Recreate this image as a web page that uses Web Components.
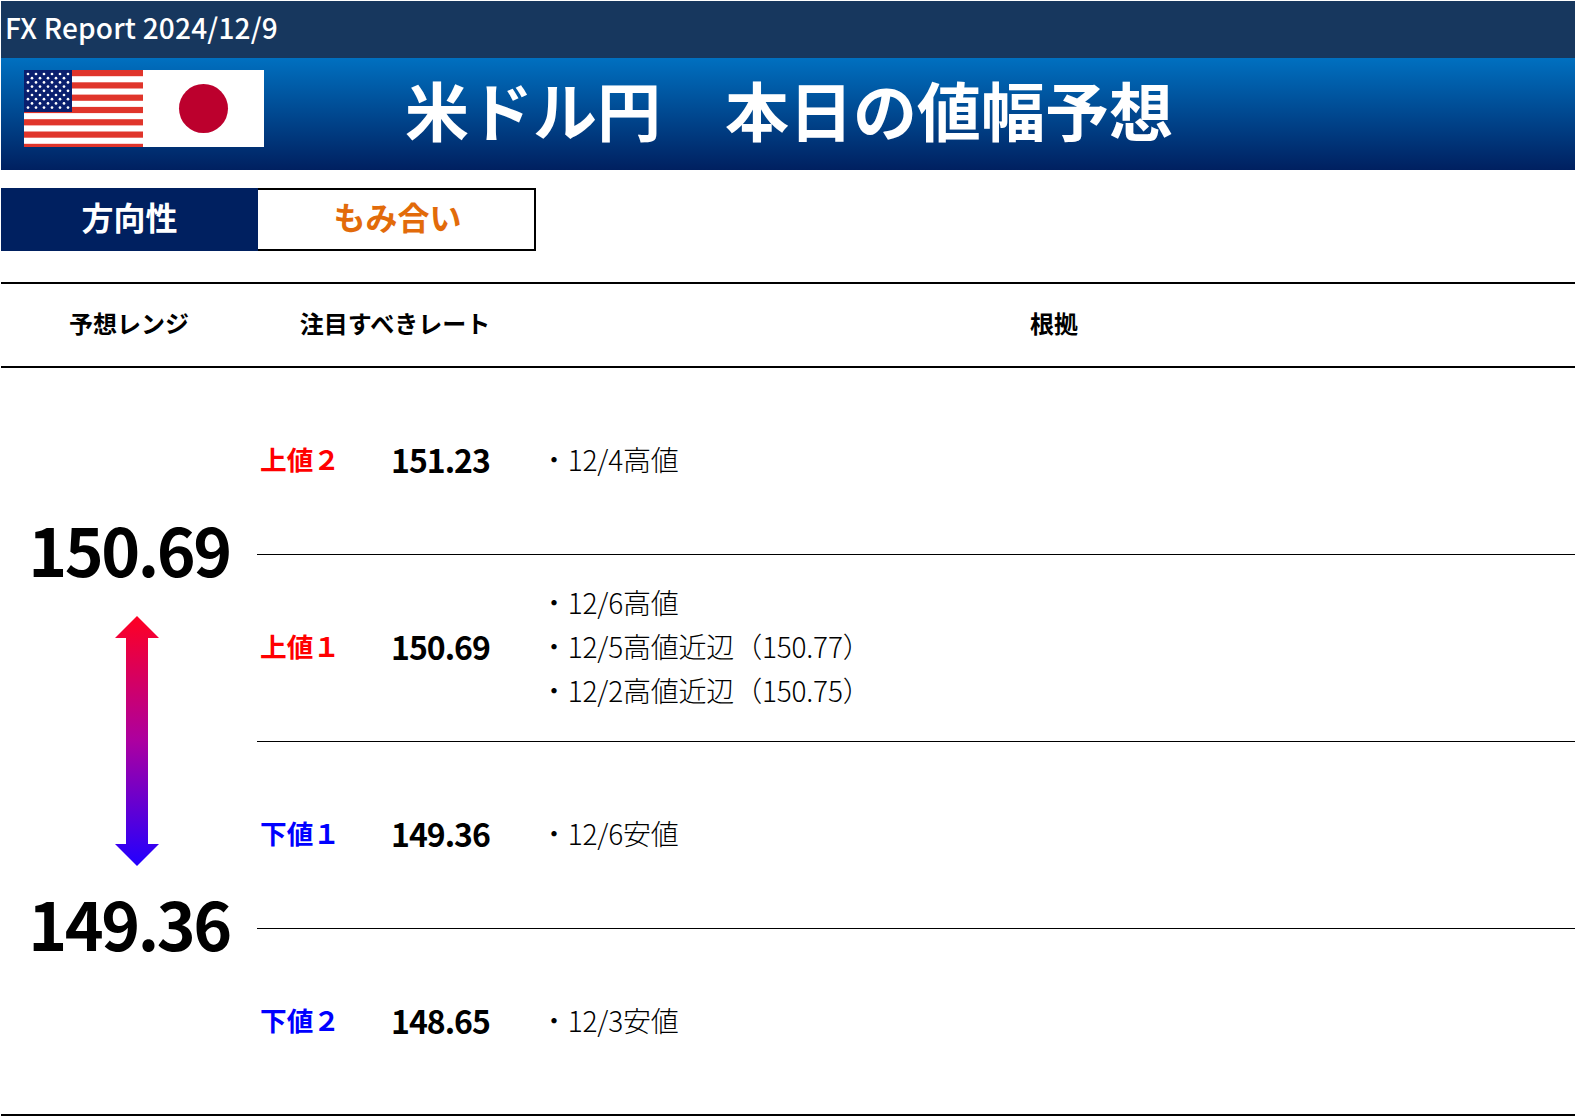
<!DOCTYPE html>
<html lang="ja"><head><meta charset="utf-8"><title>FX Report</title>
<style>
html,body{margin:0;padding:0;background:#fff}
body{padding:1px 0 0 1px;overflow:hidden;height:1116px;box-sizing:border-box;font-family:"Noto Sans CJK JP","Noto Sans",sans-serif;color:#000}
</style></head><body>
<fx-topbar>FX Report 2024/12/9</fx-topbar>
<fx-banner title-text="米ドル円　本日の値幅予想"><flag-pair></flag-pair></fx-banner>
<fx-tabs label="方向性" value="もみ合い"></fx-tabs>
<fx-table>
  <fx-range slot="range" high="150.69" low="149.36"></fx-range>
  <fx-row kind="up" label="上値２" rate="151.23"><div>・12/4高値</div></fx-row>
  <fx-row kind="up" label="上値１" rate="150.69"><div>・12/6高値</div><div>・12/5高値近辺（150.77）</div><div>・12/2高値近辺（150.75）</div></fx-row>
  <fx-row kind="down" label="下値１" rate="149.36"><div>・12/6安値</div></fx-row>
  <fx-row kind="down" label="下値２" rate="148.65"><div>・12/3安値</div></fx-row>
</fx-table>
<script>
function el(name,css,html){
  customElements.define(name,class extends HTMLElement{
    connectedCallback(){
      if(this.shadowRoot)return;
      const r=this.attachShadow({mode:'open'});
      r.innerHTML='<style>'+css+'</style>'+(typeof html==='function'?html(this):html);
    }
  });
}
el('fx-topbar',`:host{display:flex;align-items:center;height:57px;box-sizing:border-box;padding:0 0 6px 4px;background:#17375e;color:#fff;font-size:28px;font-weight:500;letter-spacing:.2px;line-height:1}`,`<slot></slot>`);
el('fx-banner',`:host{display:flex;align-items:flex-start;height:112px;box-sizing:border-box;background:linear-gradient(#0070c0,#002060);padding:12px 0 0 23px;color:#fff}
h1{margin:-2px 0 0 141px;font-size:64px;font-weight:700;line-height:80px;white-space:nowrap}`,
 h=>`<slot></slot><h1>${h.getAttribute('title-text')}</h1>`);
el('flag-pair',`:host{display:flex;width:240px;height:77px;flex:none}svg{display:block}`,()=>{
  let s='';
  for(let i=0;i<9;i++){const n=i%2?5:6;for(let j=0;j<n;j++){s+=`<circle cx="${(i%2?8:4)+j*8}" cy="${4+i*4.2}" r="1.35" fill="#fff"/>`;}}
  let st='';for(let i=0;i<7;i++){st+=`<rect x="0" y="${i*12.3}" width="119" height="6.2" fill="#e0352b"/>`;}
  return `<svg width="119" height="77" viewBox="0 0 119 77"><rect width="119" height="77" fill="#fff"/>${st}<rect width="48" height="42" fill="#0a1f6e"/>${s}</svg>
  <svg width="121" height="77" viewBox="0 0 121 77"><rect width="121" height="77" fill="#fff"/><circle cx="60.500" cy="38.500" r="24.500" fill="#bc002d"/></svg>`;
});
el('fx-tabs',`:host{display:flex;height:63px;margin-top:18px;width:535px;font-size:32px;font-weight:700;line-height:1}
.a{width:257px;background:#002060;color:#fff;display:flex;align-items:center;justify-content:center;flex:none;padding:0 0 7px 0;box-sizing:border-box}
.b{flex:1;border:2px solid #000;border-left:0;color:#e26b0a;display:flex;align-items:center;justify-content:center;box-sizing:border-box;padding:0 0 7px 3px}`,
 h=>`<div class="a">${h.getAttribute('label')}</div><div class="b">${h.getAttribute('value')}</div>`);
el('fx-table',`:host{display:block;margin-top:31px;border-top:2px solid #000;border-bottom:2px solid #000}
.head{display:grid;grid-template-columns:256px 276px 1fr;height:84px;box-sizing:border-box;padding-bottom:4px;border-bottom:2px solid #000;align-items:center;text-align:center;font-size:24px;font-weight:700;line-height:1}
.body{display:grid;grid-template-columns:256px 1fr}
.rows{display:flex;flex-direction:column}
::slotted(fx-row:not(:last-of-type)){border-bottom:1px solid #000}
::slotted(fx-row:last-of-type){height:185px}`,
`<div class="head"><div>予想レンジ</div><div>注目すべきレート</div><div>根拠</div></div>
<div class="body"><slot name="range"></slot><div class="rows"><slot></slot></div></div>`);
el('fx-range',`:host{display:flex;flex-direction:column;align-items:center;justify-content:flex-start;padding-top:142px;box-sizing:border-box}
.v{font-size:66px;font-weight:700;letter-spacing:-2.4px;line-height:76px;height:76px;margin-left:0}
svg{display:block;margin:30px 0 18px 15px}`,
 h=>`<div class="v">${h.getAttribute('high')}</div>
 <svg width="44" height="250" viewBox="0 0 44 250"><defs><linearGradient id="g" x1="0" y1="0" x2="0" y2="1"><stop offset="0" stop-color="#ff0022"/><stop offset=".5" stop-color="#ac00a0"/><stop offset="1" stop-color="#2200ff"/></linearGradient></defs>
 <path d="M22 0L44 22H33V228H44L22 250L0 228H11V22H0Z" fill="url(#g)"/></svg>
 <div class="v">${h.getAttribute('low')}</div>`);
el('fx-row',`:host{display:grid;grid-template-columns:130px 149px 1fr;height:186px;align-items:center;font-size:28px;line-height:44px;padding-left:4px;font-weight:300;letter-spacing:-.2px}
:host>div{padding-bottom:4px}
.l{font-size:26.67px;font-weight:700;letter-spacing:0;margin-left:-1px}
:host([kind=up]) .l{color:#f00}
:host([kind=down]) .l{color:#00f}
.r{font-size:32px;font-weight:700;letter-spacing:-1px}`,
 h=>`<div class="l">${h.getAttribute('label')}</div><div class="r">${h.getAttribute('rate')}</div><div><slot></slot></div>`);
</script>
</body></html>
